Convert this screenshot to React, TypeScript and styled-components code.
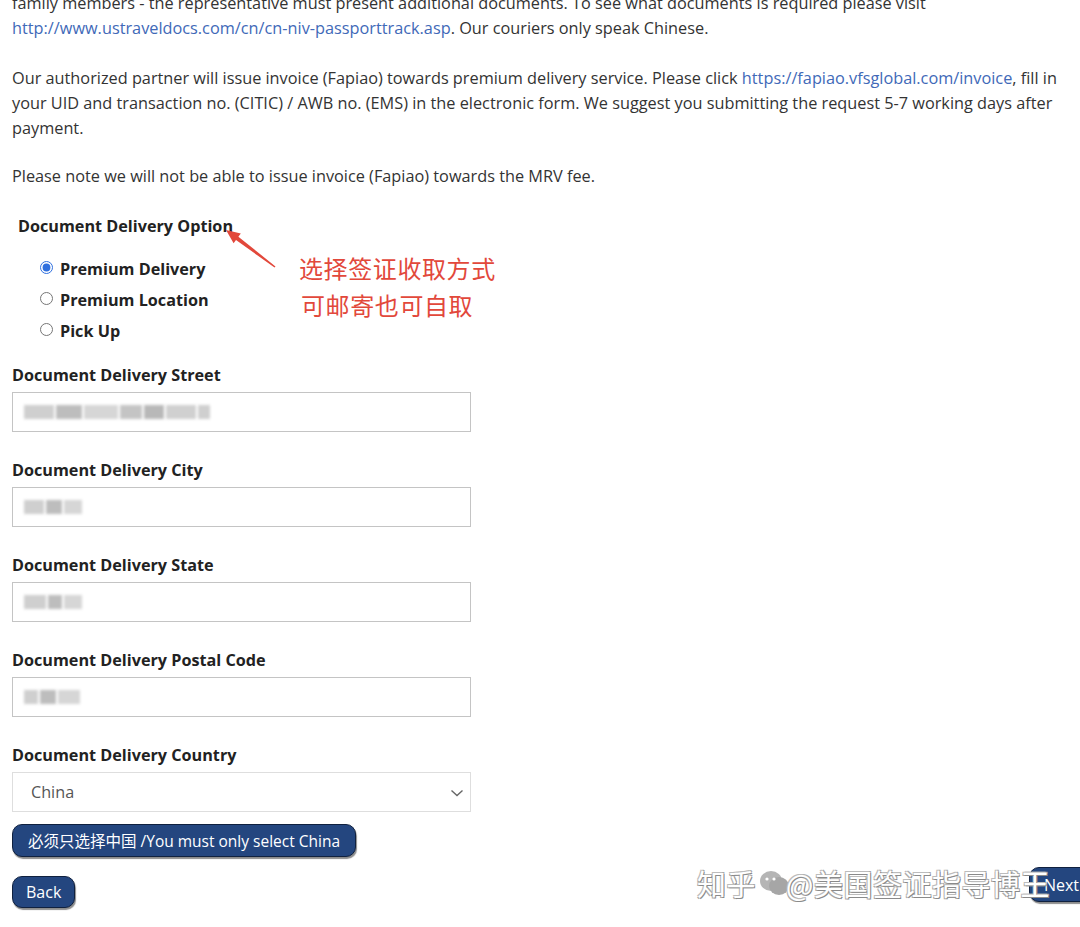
import React from "react";
import styled, { createGlobalStyle } from "styled-components";

const Global = createGlobalStyle`
  html, body { margin: 0; padding: 0; background: #fff; }
  body { overflow-x: hidden; font-family: "Open Sans", "Noto Sans", Arial, sans-serif; color: #333; }
`;

const Page = styled.div`
  position: relative;
  width: 1080px;
  height: 927px;
  overflow: hidden;
  padding-left: 12px;
  box-sizing: border-box;
`;

const Para = styled.p<{ $gap: number; $top?: number }>`
  margin: ${(p) => p.$top ?? 0}px 0 ${(p) => p.$gap}px 0;
  font-size: 16.3px;
  line-height: 25px;
  color: #333;
  white-space: nowrap;
`;

const Link = styled.a`
  color: #4169b8;
  text-decoration: none;
`;

const OptionTitle = styled.div`
  margin-left: 6px;
  font-weight: 700;
  font-size: 16.2px;
  line-height: 22px;
  color: #222;
  margin-bottom: 16px;
`;

const RadioList = styled.div`
  display: flex;
  flex-direction: column;
  padding-left: 28px;
  margin-bottom: 18px;
`;

const RadioRow = styled.label`
  display: flex;
  align-items: center;
  height: 31px;
  font-weight: 700;
  font-size: 16.2px;
  color: #222;
  gap: 7px;
  input {
    margin: 0;
    width: 13px;
    height: 13px;
    accent-color: #2f6fde;
    position: relative;
    top: -1px;
  }
`;

const Field = styled.div`
  display: flex;
  flex-direction: column;
  width: 459px;
  margin-bottom: 27px;
`;

const Label = styled.div`
  font-weight: 700;
  font-size: 16.2px;
  line-height: 22px;
  color: #222;
  margin-bottom: 6px;
`;

const InputBox = styled.div`
  position: relative;
  height: 40px;
  border: 1px solid #c4c4c4;
  box-sizing: border-box;
  display: flex;
  align-items: center;
  padding-left: 11px;
  gap: 2px;
`;

const Blur = styled.span<{ $w: number; $shade: string }>`
  display: inline-block;
  width: ${(p) => p.$w}px;
  height: 14px;
  background: ${(p) => p.$shade};
  filter: blur(1.8px);
`;

const SelectBox = styled.div`
  position: relative;
  height: 40px;
  border: 1px solid #dedede;
  box-sizing: border-box;
  display: flex;
  align-items: center;
  padding-left: 18px;
  font-size: 16.2px;
  color: #555;
`;

const Chevron = styled.svg`
  position: absolute;
  right: 6px;
  top: 13px;
`;

const NavyButton = styled.button`
  font-family: "Open Sans", "Noto Sans CJK SC", sans-serif;
  font-size: 16px;
  color: #fff;
  background: #24467f;
  border: 1px solid #10213f;
  border-radius: 10px;
  box-shadow: 1px 2px 1px rgba(0, 0, 0, 0.45);
  padding: 0 15px;
  height: 33px;
  cursor: pointer;
`;

const HintButton = styled(NavyButton)`
  align-self: flex-start;
  margin-top: -15px;
  font-size: 15.5px;
`;

const Column = styled.div`
  display: flex;
  flex-direction: column;
`;

const BottomRow = styled.div`
  display: flex;
  justify-content: space-between;
  align-items: flex-start;
  margin-top: 10px;
  margin-right: -14px;
`;

const BackButton = styled(NavyButton)`
  margin-top: 9px;
  height: 32px;
  padding: 0 13px;
`;

const NextButton = styled(NavyButton)`
  height: 35px;
  padding: 0 14px;
`;

const Annotation = styled.div`
  position: absolute;
  left: 299px;
  top: 249px;
  font-family: "Noto Sans CJK SC", sans-serif;
  font-size: 24px;
  line-height: 37px;
  color: #e2483b;
  letter-spacing: 0.6px;
`;

const AnnotLine = styled.div<{ $indent?: number }>`
  padding-left: ${(p) => p.$indent ?? 0}px;
`;

const Arrow = styled.svg`
  position: absolute;
  left: 220px;
  top: 222px;
`;

const Watermark = styled.div`
  position: absolute;
  left: 697px;
  top: 864px;
  display: flex;
  align-items: center;
  font-family: "Noto Sans CJK SC", sans-serif;
  font-size: 29px;
  line-height: 38px;
  color: #fff;
  letter-spacing: 0.5px;
  text-shadow: 1px 1px 0 #8a8a8a, -1px -1px 0 #bcbcbc, 1px -1px 0 #aaa, -1px 1px 0 #aaa;
  z-index: 2;
  pointer-events: none;
`;

const redactShades = ["#cfcfcf", "#bdbdbd", "#d6d6d6", "#c4c4c4", "#b8b8b8", "#d0d0d0"];

function Redacted({ widths }: { widths: number[] }) {
  return (
    <>
      {widths.map((w, i) => (
        <Blur key={i} $w={w} $shade={redactShades[i % redactShades.length]} />
      ))}
    </>
  );
}

function TextField({ label, blocks }: { label: string; blocks: number[] }) {
  return (
    <Field>
      <Label>{label}</Label>
      <InputBox>
        <Redacted widths={blocks} />
      </InputBox>
    </Field>
  );
}

export default function App() {
  return (
    <>
      <Global />
      <Page>
        <Para $gap={25} $top={-9}>
          family members - the representative must present additional documents. To see what documents is required please visit
          <br />
          <Link href="#">http://www.ustraveldocs.com/cn/cn-niv-passporttrack.asp</Link>. Our couriers only speak Chinese.
        </Para>
        <Para $gap={23}>
          Our authorized partner will issue invoice (Fapiao) towards premium delivery service. Please click{" "}
          <Link href="#">https://fapiao.vfsglobal.com/invoice</Link>, fill in
          <br />
          your UID and transaction no. (CITIC) / AWB no. (EMS) in the electronic form. We suggest you submitting the request 5-7 working days after
          <br />
          payment.
        </Para>
        <Para $gap={26}>Please note we will not be able to issue invoice (Fapiao) towards the MRV fee.</Para>

        <OptionTitle>Document Delivery Option</OptionTitle>
        <RadioList>
          <RadioRow>
            <input type="radio" name="opt" defaultChecked />
            Premium Delivery
          </RadioRow>
          <RadioRow>
            <input type="radio" name="opt" />
            Premium Location
          </RadioRow>
          <RadioRow>
            <input type="radio" name="opt" />
            Pick Up
          </RadioRow>
        </RadioList>

        <Column>
          <TextField label="Document Delivery Street" blocks={[30, 26, 34, 22, 20, 30, 12]} />
          <TextField label="Document Delivery City" blocks={[20, 16, 18]} />
          <TextField label="Document Delivery State" blocks={[22, 14, 18]} />
          <TextField label="Document Delivery Postal Code" blocks={[14, 16, 22]} />
          <Field>
            <Label>Document Delivery Country</Label>
            <SelectBox>
              China
              <Chevron width="14" height="14" viewBox="0 0 14 14">
                <path d="M1.5 4.5 L7 9.5 L12.5 4.5" fill="none" stroke="#666" strokeWidth="1.4" />
              </Chevron>
            </SelectBox>
          </Field>
          <HintButton>必须只选择中国 /You must only select China</HintButton>
          <BottomRow>
            <BackButton>Back</BackButton>
            <NextButton>Next</NextButton>
          </BottomRow>
        </Column>

        <Arrow width="60" height="50" viewBox="0 0 60 50">
          <polygon
            points="6,8 20.8,11.6 18.4,14.8 55.5,44.4 54.5,45.6 16,18 13.6,21.2"
            fill="#e2483b"
          />
        </Arrow>
        <Annotation>
          <AnnotLine>选择签证收取方式</AnnotLine>
          <AnnotLine $indent={2}>可邮寄也可自取</AnnotLine>
        </Annotation>

        <Watermark>
          <span>知乎</span>
          <svg width="34" height="30" viewBox="0 0 34 30" style={{ margin: "0 -6px 0 2px" }}>
            <ellipse cx="13" cy="13" rx="11" ry="10" fill="#b5b5b5" />
            <ellipse cx="21" cy="18" rx="10" ry="9" fill="#a6a6a6" />
            <circle cx="9" cy="11" r="1.6" fill="#fff" />
            <circle cx="16" cy="11" r="1.6" fill="#fff" />
          </svg>
          <span>@美国签证指导博王</span>
        </Watermark>
      </Page>
    </>
  );
}
